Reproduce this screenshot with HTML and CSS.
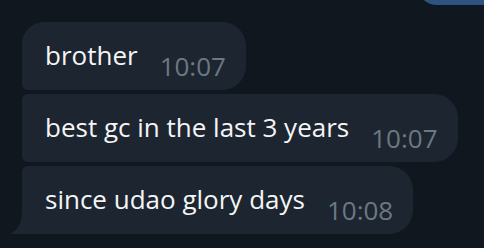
FILE: index.html
```html
<!DOCTYPE html>
<html>
<head>
  <title>Chat</title>
  <link rel="stylesheet" href="styles.css">
</head>
<body>
  <div class="chat">
    <div class="out-bubble"></div>
    <div class="group">
      <div class="bubble first">
        <span class="text">brother</span>
        <span class="time">10:07</span>
      </div>
      <div class="bubble">
        <span class="text">best gc in the last 3 years</span>
        <span class="time">10:07</span>
      </div>
      <div class="bubble last">
        <span class="text">since udao glory days</span>
        <span class="time">10:08</span>
        <svg class="tail" width="14" height="30" viewBox="0 0 14 30">
          <path d="M12 0 L14 0 L14 30 L0 30 C6 27 12 20 12 8 Z" fill="#1d2530"/>
        </svg>
      </div>
    </div>
  </div>
</body>
</html>
```

FILE: styles.css
```css
/* Chat window */
body {
  margin: 0;
  padding: 0;
  background-color: #11171f;
  font-family: "Open Sans", Arial, sans-serif;
  overflow: hidden;
}

.chat {
  display: flex;
  flex-direction: column;
  height: 248px;
}

.out-bubble {
  align-self: flex-end;
  width: 90px;
  height: 40px;
  margin-top: -35px;
  margin-right: -23px;
  background-color: #2e5382;
  border-radius: 24px;
}

.group {
  display: flex;
  flex-direction: column;
  align-items: flex-start;
  gap: 4px;
  padding: 17px 0 0 22px;
}

.bubble {
  position: relative;
  display: flex;
  align-items: flex-start;
  height: 68px;
  box-sizing: border-box;
  padding: 15px 20px 0 23px;
  background-color: #1d2530;
  border-radius: 6px 24px 24px 6px;
}

.bubble.first {
  border-top-left-radius: 22px;
}

.bubble.last {
  border-bottom-left-radius: 0;
}

.text {
  font-size: 26px;
  line-height: 36px;
  color: #f4f5f6;
}

.time {
  margin-top: 14px;
  margin-left: 22px;
  font-size: 26px;
  line-height: 30px;
  color: #6c7883;
}

.tail {
  position: absolute;
  left: -12px;
  bottom: 0;
}
```
